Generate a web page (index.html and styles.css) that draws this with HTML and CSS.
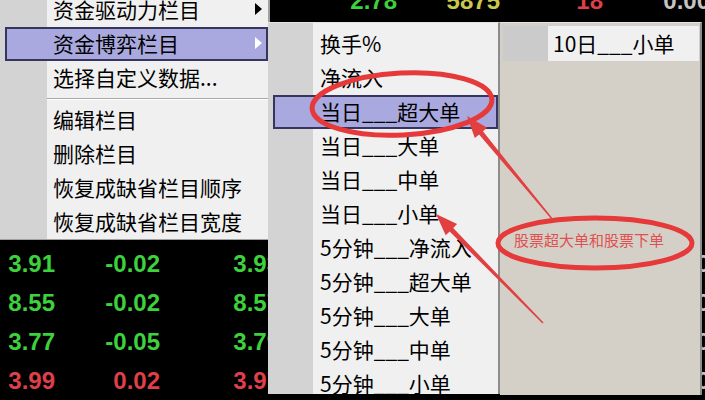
FILE: index.html
```html
<!DOCTYPE html>
<html>
<head>
    <title>栏目设置</title>
    <link rel="stylesheet" href="styles.css">
</head>
<body>
    <div class="screen">
        <!-- quote board behind the context menu -->
        <div class="board">
            <div class="quote-row first">
                <span class="down">3.92</span>
                <span class="down">-0.01</span>
                <span></span>
                <span class="down">2.78</span>
                <span class="vol">5875</span>
                <span class="up">18</span>
                <span class="flat">0.00</span>
            </div>
            <div class="under-menu"></div>
            <div class="quote-row">
                <span class="down">3.91</span>
                <span class="down">-0.02</span>
                <span class="down">3.93</span>
                <span class="down">0.51</span>
                <span class="vol">6120</span>
                <span class="up">12</span>
                <span class="flat">0.00</span>
            </div>
            <div class="quote-row">
                <span class="down">8.55</span>
                <span class="down">-0.02</span>
                <span class="down">8.57</span>
                <span class="down">1.06</span>
                <span class="vol">2304</span>
                <span class="up">5</span>
                <span class="flat">0.00</span>
            </div>
            <div class="quote-row">
                <span class="down">3.77</span>
                <span class="down">-0.05</span>
                <span class="down">3.79</span>
                <span class="down">0.88</span>
                <span class="vol">4410</span>
                <span class="up">9</span>
                <span class="flat">0.00</span>
            </div>
            <div class="quote-row">
                <span class="up">3.99</span>
                <span class="up">0.02</span>
                <span class="up">3.97</span>
                <span class="up">0.63</span>
                <span class="vol">3328</span>
                <span class="up">21</span>
                <span class="flat">0.00</span>
            </div>
        </div>

        <div class="menu menu-main">
            <div class="menu-item has-sub">资金驱动力栏目</div>
            <div class="menu-item has-sub active">资金博弈栏目</div>
            <div class="menu-item">选择自定义数据...</div>
            <div class="menu-sep"></div>
            <div class="menu-item">编辑栏目</div>
            <div class="menu-item">删除栏目</div>
            <div class="menu-item">恢复成缺省栏目顺序</div>
            <div class="menu-item">恢复成缺省栏目宽度</div>
        </div>

        <div class="menu menu-sub">
            <div class="menu-item">换手%</div>
            <div class="menu-item">净流入</div>
            <div class="menu-item active">当日___超大单</div>
            <div class="menu-item">当日___大单</div>
            <div class="menu-item">当日___中单</div>
            <div class="menu-item">当日___小单</div>
            <div class="menu-item">5分钟___净流入</div>
            <div class="menu-item">5分钟___超大单</div>
            <div class="menu-item">5分钟___大单</div>
            <div class="menu-item">5分钟___中单</div>
            <div class="menu-item">5分钟___小单</div>
        </div>

        <div class="menu-side">
            <div class="side-item">10日___小单</div>
        </div>

        <!-- red hand-drawn marks -->
        <svg class="marks" width="705" height="400" viewBox="0 0 705 400">
            <ellipse cx="402" cy="104" rx="90" ry="31" transform="rotate(-3 402 104)"
                     fill="none" stroke="#e5393a" stroke-width="5"/>
            <ellipse cx="595" cy="243" rx="97" ry="25"
                     fill="none" stroke="#e5393a" stroke-width="5"/>
            <polygon fill="#e23f40" points="467,116 487.2,127.8 482.9,131.3 553.5,219.6 552.5,220.4 479.1,134.5 474.8,138"/>
            <polygon fill="#e23f40" points="436,214 457.1,224.1 453.2,227.9 543.5,322.5 542.5,323.5 449.6,231.5 445.7,235.3"/>
        </svg>
        <div class="note">股票超大单和股票下单</div>
    </div>
</body>
</html>
```

FILE: styles.css
```css
body {
    margin: 0;
    background: #000;
}

.screen {
    position: relative;
    width: 705px;
    height: 400px;
    overflow: hidden;
    background: #000;
    font-family: "Noto Sans CJK SC", sans-serif;
}

/* quote board */
.board {
    font: bold 24px "Liberation Sans", Arial, sans-serif;
}

.quote-row {
    display: grid;
    grid-template-columns: 55px 105px 120px 117px 103px 103px 107px;
    height: 39px;
    line-height: 39px;
    text-align: right;
    white-space: nowrap;
}

.quote-row.first {
    margin-top: -19px;
}

.under-menu {
    height: 224px;
}

.down { color: #3dd23d; }
.up { color: #de3f48; }
.vol { color: #c9c94e; }
.flat { color: #c4c4c4; }

/* context menus */
.menu {
    position: absolute;
    color: #000;
    font-size: 21px;
    box-sizing: border-box;
}

.menu-item {
    position: relative;
    height: 34px;
    line-height: 32px;
    padding-left: 48px;
    white-space: nowrap;
}

.menu-item.active {
    background: #a9a9df;
    box-shadow: inset 0 0 0 2px #35355e;
}

.has-sub::after {
    content: "";
    position: absolute;
    right: 6px;
    top: 50%;
    margin-top: -7px;
    border-left: 7px solid #000;
    border-top: 6px solid transparent;
    border-bottom: 6px solid transparent;
}

.has-sub.active::after {
    border-left-color: #fff;
}

.menu-sep {
    margin: 3px 0 3px 42px;
    border-top: 1px solid #a8a8a8;
    border-bottom: 1px solid #fff;
}

.menu-main {
    left: 0;
    top: -10px;
    width: 270px;
    padding: 3px 0 0 5px;
    border-right: 2px solid #a0a0a0;
    border-bottom: 1px solid #a0a0a0;
    background: linear-gradient(to right, #d3d3d3 47px, #f0f0f0 47px);
}

.menu-sub {
    left: 268px;
    top: 22px;
    bottom: 6px;
    width: 232px;
    padding: 4px 0 0 5px;
    overflow: hidden;
    border-top: 1px solid #e4e4e4;
    border-right: 2px solid #8c8c8c;
    background: linear-gradient(to right, #d3d3d3 45px, #f0f0f0 45px);
}

.menu-sub .menu-item {
    padding-left: 47px;
}

.menu-side {
    position: absolute;
    left: 500px;
    right: 3px;
    top: 22px;
    bottom: 5px;
    padding: 3px 0 0 3px;
    border-top: 1px solid #e4e4e4;
    border-right: 2px solid #8c8c8c;
    background: #d4d0c8;
    font-size: 21px;
}

.side-item {
    height: 35px;
    line-height: 35px;
    margin-right: 1px;
    padding-left: 50px;
    background: linear-gradient(to right, #cbcbcb 45px, #f0f0f0 45px);
    white-space: nowrap;
}

/* annotations */
.marks {
    position: absolute;
    left: 0;
    top: 0;
    pointer-events: none;
}

.note {
    position: absolute;
    left: 514px;
    top: 230px;
    color: #e05050;
    font-size: 15px;
    line-height: 20px;
    white-space: nowrap;
}
```
